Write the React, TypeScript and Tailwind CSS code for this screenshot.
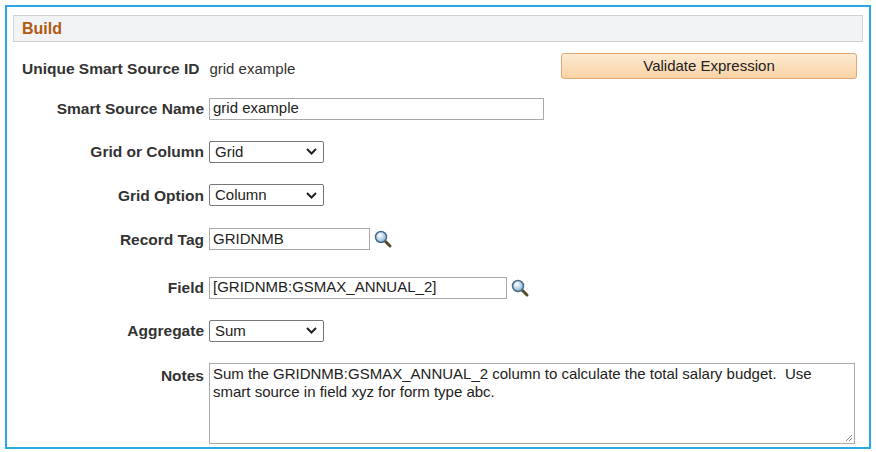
import React from 'react';

const Lens = () => (
  <svg width="20" height="20" viewBox="0 0 20 20" className="ml-[3px]">
    <defs>
      <radialGradient id="lg" cx="40%" cy="35%" r="60%">
        <stop offset="0%" stopColor="#ffffff" />
        <stop offset="100%" stopColor="#8fb8d8" />
      </radialGradient>
    </defs>
    <line x1="11.5" y1="11.5" x2="17" y2="17" stroke="#5a4a2a" strokeWidth="3" strokeLinecap="round" />
    <circle cx="8" cy="8" r="5.5" fill="url(#lg)" stroke="#4a6a8a" strokeWidth="1.5" />
  </svg>
);

const Select = ({ value }: { value: string }) => (
  <div className="flex items-center justify-between w-[115px] h-[22px] border border-[#767676] rounded-[2px] bg-white pl-[5px] pr-[6px] text-[15px] text-[#222]">
    <span>{value}</span>
    <svg width="11" height="7" viewBox="0 0 11 7">
      <path d="M1 1l4.5 4.5L10 1" fill="none" stroke="#222" strokeWidth="2" />
    </svg>
  </div>
);

const Row = ({ label, className = '', children }: { label: string; className?: string; children: React.ReactNode }) => (
  <div className={`flex items-center ${className}`}>
    <div className="w-[196px] text-right font-bold text-[15.5px] text-[#333] pr-[5px] shrink-0">{label}</div>
    {children}
  </div>
);

const input = 'h-[22px] border border-[#a9a9a9] bg-white px-[3px] text-[15px] text-[#222] flex items-center';

export default function App() {
  return (
    <div className="w-[876px] h-[452px] bg-white p-[5px]" style={{ fontFamily: '"Liberation Sans", Arial, sans-serif' }}>
      <div className="w-[866px] h-[444px] border-2 border-[#2aa8e2] pt-[8px] px-[6px]">
        <div className="h-[27px] border border-[#cfd3d6] bg-[#f1f3f4] flex items-center pl-[8px]">
          <span className="font-bold text-[16px] text-[#b35a11]">Build</span>
        </div>
        <div className="flex items-center justify-between mt-[14px] pl-[9px] pr-[6px] h-[26px]">
          <div className="flex items-center">
            <span className="font-bold text-[15.5px] text-[#333]">Unique Smart Source ID</span>
            <span className="ml-[10px] text-[15px] text-[#333]">grid example</span>
          </div>
          <button className="w-[296px] h-[26px] -mt-[6px] rounded-[3px] border border-[#e2a873] bg-gradient-to-b from-[#fdebd2] to-[#f9d2a4] text-[15px] text-[#222]">
            Validate Expression
          </button>
        </div>
        <Row label="Smart Source Name" className="mt-[15px]">
          <div className={`${input} w-[335px]`}>grid example</div>
        </Row>
        <Row label="Grid or Column" className="mt-[20px]">
          <Select value="Grid" />
        </Row>
        <Row label="Grid Option" className="mt-[20px]">
          <Select value="Column" />
        </Row>
        <Row label="Record Tag" className="mt-[21px]">
          <div className={`${input} w-[161px]`}>GRIDNMB</div>
          <Lens />
        </Row>
        <Row label="Field" className="mt-[25px]">
          <div className={`${input} w-[298px]`}>[GRIDNMB:GSMAX_ANNUAL_2]</div>
          <Lens />
        </Row>
        <Row label="Aggregate" className="mt-[20px]">
          <Select value="Sum" />
        </Row>
        <div className="flex items-start mt-[20px]">
          <div className="w-[196px] text-right font-bold text-[15.5px] text-[#333] pr-[5px] shrink-0 pt-[1px]">Notes</div>
          <div className="relative w-[646px] h-[81px] border border-[#a9a9a9] px-[3px] pt-[1px] text-[15px] leading-[18px] text-[#222]">
            Sum the GRIDNMB:GSMAX_ANNUAL_2 column to calculate the total salary budget.&nbsp; Use smart source in field xyz for form type abc.
            <svg className="absolute right-[1px] bottom-[1px]" width="9" height="9" viewBox="0 0 9 9">
              <path d="M8 2L2 8M8 5L5 8" stroke="#888" strokeWidth="1" />
            </svg>
          </div>
        </div>
      </div>
    </div>
  );
}
